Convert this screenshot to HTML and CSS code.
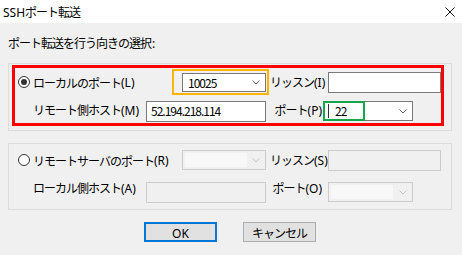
FILE: index.html
```html
<!DOCTYPE html>
<html lang="ja">
<head>
    <meta charset="UTF-8">
    <title>SSHポート転送</title>
    <link rel="stylesheet" href="styles.css">
</head>
<body>
    <div class="titlebar">
        <span class="title"><span class="latin">SSH</span>ポート転送</span>
        <svg class="close" width="10" height="10" viewBox="0 0 10 10">
            <path d="M0.5 0.5 L9.5 9.5 M9.5 0.5 L0.5 9.5" stroke="#111" stroke-width="1" fill="none"/>
        </svg>
    </div>

    <div class="dialog">
        <div class="prompt">ポート転送を行う向きの選択<span class="latin colon">:</span></div>

        <div class="group">
            <div class="panel panel-marked rows-local">
                <div class="choice"><span class="radio checked"></span>ローカルのポート<span class="latin">(L)</span></div>
                <div class="mark-orange">
                    <div class="combo combo-local">
                        <span class="combo-text">10025</span>
                        <svg class="chevron" width="8" height="5" viewBox="0 0 8 5"><path d="M0.5 0.5 L4 4 L7.5 0.5" stroke="#606060" fill="none"/></svg>
                    </div>
                </div>
                <span class="tag">リッスン<span class="latin">(I)</span></span>
                <div class="textbox listen"></div>

                <span class="sub">リモート側ホスト<span class="latin">(M)</span></span>
                <div class="textbox host low">52.194.218.114</div>
                <span class="tag">ポート<span class="latin">(P)</span></span>
                <div class="combo combo-port low">
                    <span class="caret"></span>
                    <span class="combo-text">22</span>
                    <svg class="chevron" width="8" height="5" viewBox="0 0 8 5"><path d="M0.5 0.5 L4 4 L7.5 0.5" stroke="#606060" fill="none"/></svg>
                    <span class="mark-green"></span>
                </div>
            </div>
        </div>

        <div class="group">
            <div class="panel rows-remote">
                <div class="choice"><span class="radio"></span>リモートサーバのポート<span class="latin">(R)</span></div>
                <div class="combo combo-remote disabled">
                    <span class="combo-fill"></span>
                    <svg class="chevron" width="8" height="5" viewBox="0 0 8 5"><path d="M0.5 0.5 L4 4 L7.5 0.5" stroke="#c4c4c4" fill="none"/></svg>
                </div>
                <span class="tag">リッスン<span class="latin">(S)</span></span>
                <div class="textbox listen disabled"></div>

                <span class="sub">ローカル側ホスト<span class="latin">(A)</span></span>
                <div class="textbox host low disabled"></div>
                <span class="tag">ポート<span class="latin">(O)</span></span>
                <div class="combo combo-port-off low disabled">
                    <span class="combo-fill"></span>
                    <svg class="chevron" width="8" height="5" viewBox="0 0 8 5"><path d="M0.5 0.5 L4 4 L7.5 0.5" stroke="#c4c4c4" fill="none"/></svg>
                </div>
            </div>
        </div>

        <div class="actions">
            <button class="btn btn-default"><span class="latin">OK</span></button>
            <button class="btn">キャンセル</button>
        </div>
    </div>
</body>
</html>
```

FILE: styles.css
```css
* {
    margin: 0;
    padding: 0;
    box-sizing: border-box;
}

body {
    width: 462px;
    height: 255px;
    overflow: hidden;
    background-color: #f0f0f0;
    color: #000;
    font-family: "Noto Sans CJK JP", "Noto Sans", sans-serif;
    font-size: 12px;
    letter-spacing: -1px;
}

/* latin runs keep their natural spacing */
.latin {
    font-family: "Noto Sans", "Noto Sans CJK JP", sans-serif;
    letter-spacing: 0;
}

.colon {
    margin-left: 1px;
}

.titlebar {
    height: 23px;
    background: #fff;
    display: flex;
    align-items: center;
    justify-content: space-between;
    padding: 0 7px 0 3px;
}

.close {
    display: block;
}

.dialog {
    padding: 0 10px 0 8px;
}

.prompt {
    height: 40px;
    line-height: 40px;
}

.group {
    border: 1px solid #dcdcdc;
    padding: 1px 7px 4px 3px;
}

.group + .group {
    margin-top: 12px;
    padding-bottom: 2px;
}

.panel {
    border: 3px solid transparent;
    display: grid;
    grid-template-columns: 131px 124px 53px 118px;
    align-items: center;
}

.panel-marked {
    border-color: #ff0000;
}

.rows-local {
    grid-template-rows: 28px 27px;
}

.rows-remote {
    grid-template-rows: 24px 32px;
}

.choice {
    display: flex;
    align-items: center;
    padding-left: 3px;
    white-space: nowrap;
}

.radio {
    flex-shrink: 0;
    width: 12px;
    height: 12px;
    border: 1px solid #333;
    border-radius: 50%;
    margin-right: 3px;
    background: #fff;
    display: flex;
    align-items: center;
    justify-content: center;
}

.radio.checked::after {
    content: "";
    width: 6px;
    height: 6px;
    border-radius: 50%;
    background: #333;
}

.sub {
    padding-left: 18px;
    white-space: nowrap;
}

.tag {
    text-align: right;
    padding-right: 1px;
    white-space: nowrap;
}

.low {
    align-self: end;
}

.textbox {
    height: 21px;
    background: #fff;
    border: 1px solid #7a7a7a;
    line-height: 17px;
    padding-left: 4px;
}

.textbox.listen {
    margin-left: 5px;
    width: 113px;
}

.textbox.host {
    width: 120px;
    margin-bottom: 1px;
}

.textbox.disabled {
    background: #f0f0f0;
    border-color: #cccccc;
}

.mark-orange {
    justify-self: end;
    margin-right: 1px;
    width: 97px;
    height: 26px;
    border: 2px solid #ffb400;
    display: flex;
    align-items: center;
    justify-content: flex-end;
    padding: 1px 1px 0 0;
}

.combo {
    position: relative;
    height: 20px;
    background: #fff;
    border: 1px solid #7a7a7a;
    display: flex;
    align-items: center;
    padding-left: 5px;
}

.combo-text {
    line-height: 16px;
}

.chevron {
    flex-shrink: 0;
    margin-left: auto;
    margin-right: 5px;
}

.combo-local {
    width: 84px;
    height: 19px;
}

.combo-port {
    width: 90px;
    margin-bottom: 2px;
    padding-left: 4px;
}

.caret {
    width: 1px;
    height: 14px;
    background: #333;
    margin-right: 6px;
}

.mark-green {
    position: absolute;
    left: -1px;
    top: -1px;
    width: 42px;
    height: 20px;
    border: 2px solid #14a84a;
}

.combo.disabled {
    background: #f0f0f0;
    border-color: #cccccc;
    padding-left: 2px;
}

.combo-fill {
    width: 62px;
    height: 14px;
    background: #f8f8f8;
}

.combo-remote {
    justify-self: end;
    margin-right: 4px;
    width: 84px;
}

.combo-port-off {
    margin-left: 5px;
    width: 85px;
    margin-bottom: 2px;
}

.actions {
    display: flex;
    justify-content: center;
    gap: 26px;
    margin-top: 12px;
}

.btn {
    width: 73px;
    height: 20px;
    background: #e1e1e1;
    border: 1px solid #adadad;
    font-family: inherit;
    font-size: 12px;
    letter-spacing: inherit;
    color: #000;
}

.btn-default {
    border: 2px solid #0078d7;
}
```
